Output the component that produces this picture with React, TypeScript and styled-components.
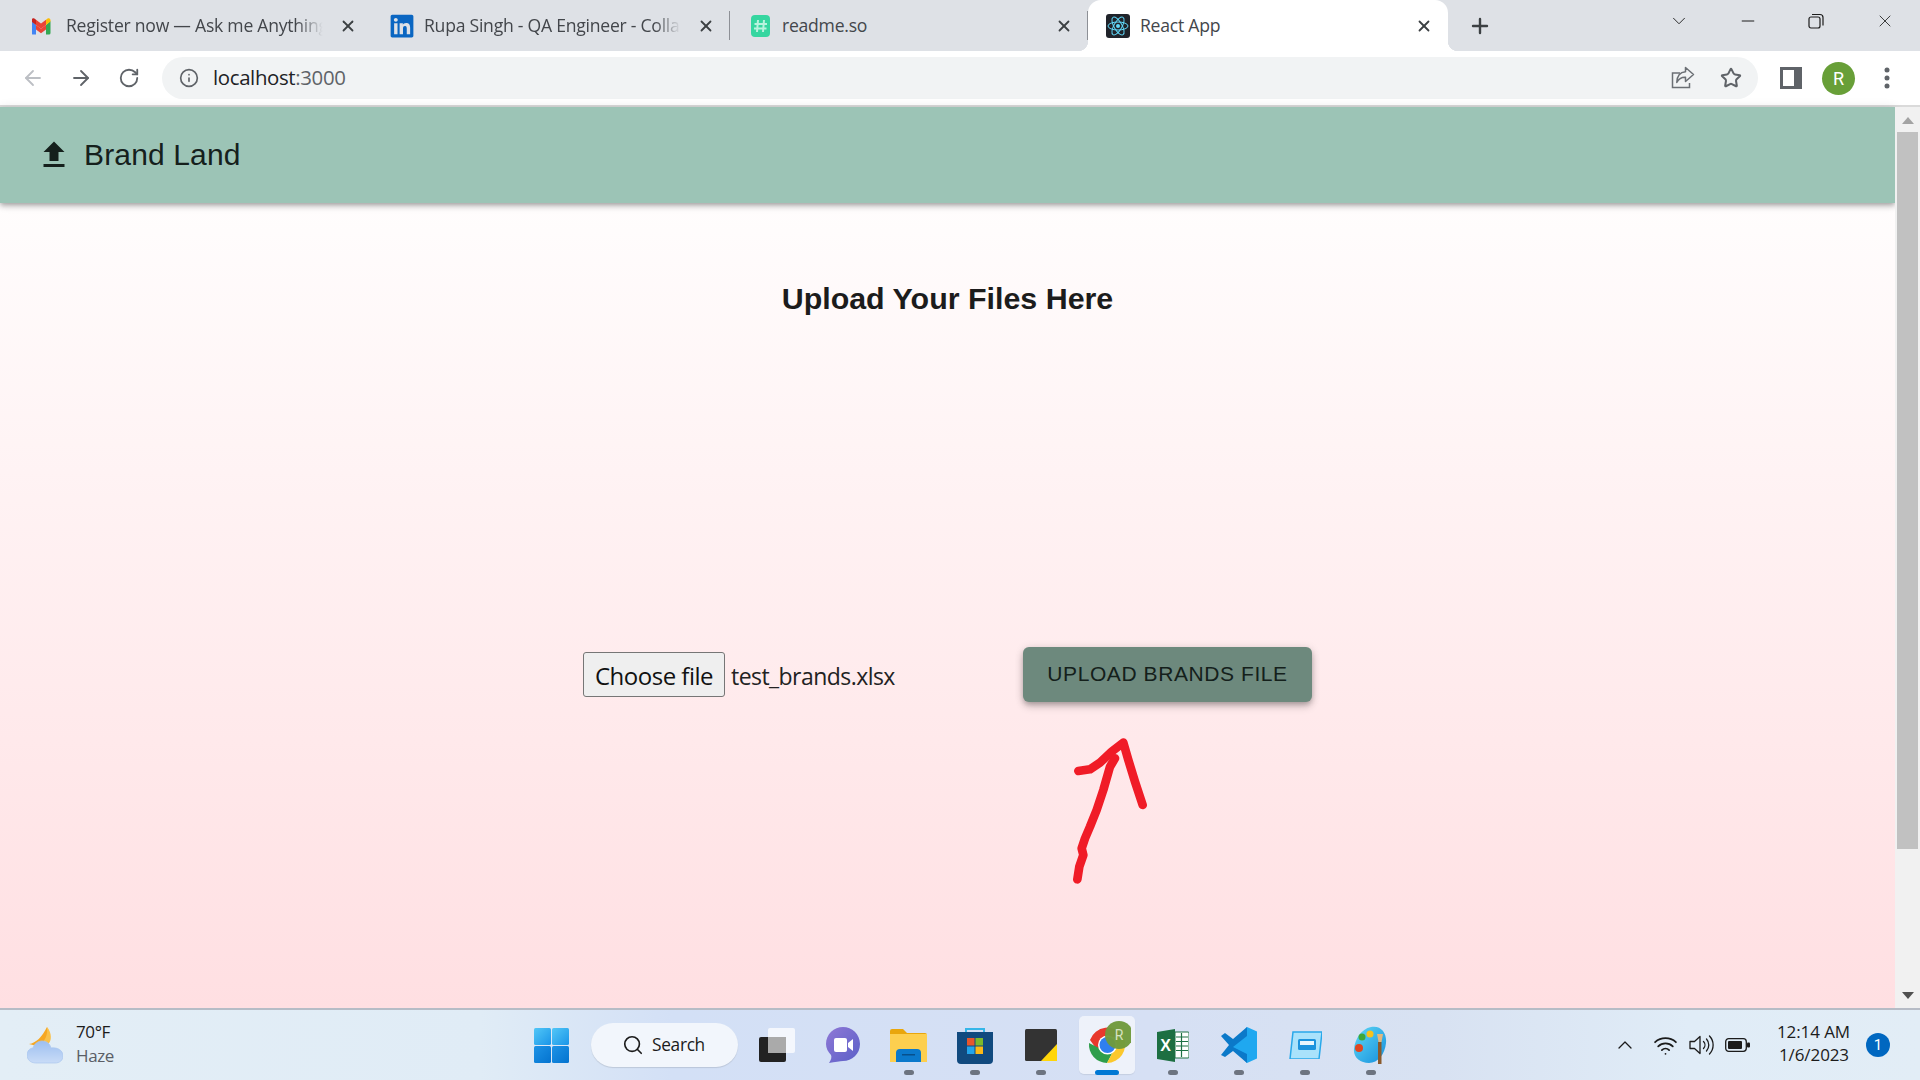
import React from "react";
import styled, { createGlobalStyle } from "styled-components";
import { ArrowLeft, ArrowRight, RotateCw, Info, Star, X, Plus, ChevronDown, ChevronUp, Minus, Search, Wifi } from "lucide-react";
import { FaLinkedin } from "react-icons/fa";

const Global = createGlobalStyle`
  html, body { margin: 0; padding: 0; overflow: hidden; background: #fff; }
  * { box-sizing: border-box; }
`;
const UI = `"Open Sans", "Noto Sans", sans-serif`;

const Screen = styled.div`
  width: 1920px; height: 1080px; display: flex; flex-direction: column; overflow: hidden; position: relative;
`;
const TabStrip = styled.div`
  height: 51px; background: #dee1e6; display: flex; align-items: stretch; padding-left: 14px; flex: none;
`;
const Tab = styled.div<{ $active?: boolean; $sep?: boolean }>`
  width: ${(p) => (p.$active ? 360 : 358)}px; display: flex; align-items: center; padding: 0 14px 0 18px; gap: 10px; position: relative;
  background: ${(p) => (p.$active ? "#fff" : "transparent")};
  border-radius: ${(p) => (p.$active ? "13px 13px 0 0" : "0")};
  ${(p) => p.$active && `
    &::before, &::after { content: ""; position: absolute; bottom: 0; width: 10px; height: 10px; }
    &::before { left: -10px; background: radial-gradient(circle at 0 0, transparent 10px, #fff 10.5px); }
    &::after { right: -10px; background: radial-gradient(circle at 100% 0, transparent 10px, #fff 10.5px); }
  `}
  ${(p) => p.$sep && `
    &::after { content: ""; position: absolute; right: 0; top: 11px; bottom: 11px; width: 1px; background: #8d9096; }
  `}
`;
const Favicon = styled.span`
  width: 24px; height: 24px; flex: none; display: flex; align-items: center; justify-content: center;
`;
const TabTitle = styled.span<{ $fade?: boolean }>`
  flex: 1; min-width: 0; overflow: hidden; white-space: nowrap; font: 400 17.6px ${UI}; letter-spacing: -0.25px; color: #43464b; position: relative; top: -1px;
  ${(p) => p.$fade && `-webkit-mask-image: linear-gradient(90deg, #000 88%, transparent 98%); mask-image: linear-gradient(90deg, #000 88%, transparent 98%);`}
`;
const TabClose = styled.span`
  width: 20px; height: 20px; flex: none; display: flex; align-items: center; justify-content: center; color: #3c4043;
`;
const NewTab = styled.span`
  margin-left: 20px; width: 24px; display: flex; align-items: center; justify-content: center; color: #3c4043;
`;
const WindowControls = styled.div`
  margin-left: auto; display: flex; align-items: flex-start; padding-right: 1px;
`;
const WinButton = styled.span`
  width: 68.5px; height: 42px; display: flex; align-items: center; justify-content: center; color: #1c1c1c;
`;
const Toolbar = styled.div`
  height: 54px; background: #fff; display: flex; align-items: center; padding-left: 21px; flex: none;
`;
const NavButton = styled.span<{ $dim?: boolean }>`
  width: 24px; height: 24px; margin-right: 24px; display: flex; align-items: center; justify-content: center;
  color: ${(p) => (p.$dim ? "#bcbfc4" : "#5f6368")};
`;
const Omnibox = styled.div`
  width: 1596px; margin-left: -3px; height: 42px; border-radius: 21px; background: #f1f3f4; display: flex; align-items: center; padding: 0 15px 0 17px; color: #5f6368;
`;
const Url = styled.span`
  margin-left: 14px; font: 400 20.4px ${UI}; letter-spacing: -0.35px; color: #202124; position: relative; top: -1px;
  & > em { font-style: normal; color: #5f6368; }
`;
const OmniActions = styled.div`
  margin-left: auto; display: flex; align-items: center; gap: 24px; color: #5f6368;
`;
const ToolIcon = styled.span<{ $lead?: boolean }>`
  width: 24px; height: 24px; display: flex; align-items: center; justify-content: center; color: #5f6368;
  ${(p) => p.$lead && "margin-left: 21px;"}
`;
const Avatar = styled.span`
  width: 33px; height: 33px; border-radius: 50%; background: #689f38; color: #fff; display: flex; align-items: center; justify-content: center; font: 400 18px "Roboto", sans-serif; margin: 0 20px 0 19px;
`;
const ChromeLine = styled.div`
  height: 2px; background: #dadada; flex: none;
`;
const Viewport = styled.div`
  height: 901px; display: flex; flex: none; position: relative;
`;
const Page = styled.div`
  flex: 1; min-width: 0; display: flex; flex-direction: column; background: linear-gradient(180deg, #fffdfd 96px, #ffdfe2 100%);
`;
const AppBar = styled.header`
  height: 96px; background: #9cc4b6; display: flex; align-items: center; padding-left: 36px; gap: 12px; flex: none;
  box-shadow: 0 2px 4px -1px rgba(0,0,0,.2), 0 4px 5px rgba(0,0,0,.14), 0 1px 10px rgba(0,0,0,.12);
`;
const Brand = styled.h1`
  margin: 0; font: 400 30px "Liberation Sans", sans-serif; color: #15201c; letter-spacing: 0.15px;
`;
const PageTitle = styled.h2`
  margin: 76px 0 0; text-align: center; font: 700 30.4px/38px "Liberation Sans", sans-serif; color: #1c1c1c;
`;
const UploadRow = styled.div`
  margin-top: 330px; display: flex; justify-content: center; align-items: center;
`;
const FileField = styled.div`
  width: 440px; display: flex; align-items: center; gap: 6px;
`;
const ChooseButton = styled.button`
  width: 142px; height: 45px; padding: 1px 0 0; background: #efefef; border: 1px solid #767676; border-radius: 3px; font: 400 24px ${UI}; letter-spacing: -0.5px; color: #111;
`;
const FileName = styled.span`
  font: 400 23px ${UI}; letter-spacing: -0.55px; color: #222; position: relative; top: 1px;
`;
const UploadButton = styled.button`
  width: 289px; height: 55px; padding: 0 0 1px; border: 0; border-radius: 6px; background: #6d897d; color: #14201b; font: 400 21px "Liberation Sans", sans-serif; letter-spacing: 0.58px; text-transform: uppercase;
  box-shadow: 0 3px 5px -1px rgba(0,0,0,.2), 0 5px 8px rgba(0,0,0,.14), 0 1px 10px rgba(0,0,0,.12);
`;
const Annotation = styled.svg`
  position: absolute; left: 1040px; top: 613px; width: 160px; height: 180px;
`;
const Scrollbar = styled.div`
  width: 25px; background: #f1f1f1; display: flex; flex-direction: column; align-items: center; flex: none; padding: 0 2px;
`;
const ScrollArrow = styled.span<{ $down?: boolean }>`
  width: 0; height: 0; border-left: 6px solid transparent; border-right: 6px solid transparent; flex: none;
  ${(p) => (p.$down ? "border-top: 7px solid #505050; margin-top: auto; margin-bottom: 9px;" : "border-bottom: 7px solid #a3a3a3; margin-top: 10px;")}
`;
const ScrollThumb = styled.div`
  width: 100%; height: 717px; margin-top: 8px; background: #c1c1c1; flex: none;
`;
const Taskbar = styled.footer`
  height: 72px; border-top: 2px solid #b6bcc6; flex: none; display: flex; align-items: stretch;
  background: linear-gradient(90deg, #e3eef6 0%, #e0ecf6 25%, #d3e0f6 35%, #d6e0f4 60%, #d8e2f2 75%, #e0ecf7 88%, #e2edf6 100%);
`;
const Weather = styled.div`
  width: 518px; display: flex; align-items: center; padding-left: 27px; gap: 13px;
`;
const WeatherText = styled.div`
  display: flex; flex-direction: column; font: 400 17px/24px ${UI}; letter-spacing: -0.4px; color: #1b1b1b; margin-top: -2px;
  & > small { font-size: 17px; color: #5a5e66; }
`;
const Slot = styled.div<{ $active?: boolean; $dot?: boolean }>`
  width: 66px; display: flex; align-items: center; justify-content: center; position: relative;
  ${(p) => p.$active && `&::before { content: ""; position: absolute; left: 5px; right: 5px; top: 6px; bottom: 6px; background: rgba(245,248,252,.75); border-radius: 5px; box-shadow: 0 1px 1px rgba(0,0,0,.08); }`}
  ${(p) => (p.$dot || p.$active) && `&::after { content: ""; position: absolute; bottom: 5px; left: 50%; transform: translateX(-50%); height: 5px; border-radius: 3px;
     width: ${p.$active ? "24px" : "10px"}; background: ${p.$active ? "#0078d4" : "#6d7480"}; }`}
  & > svg { position: relative; }
`;
const SearchPill = styled.div`
  width: 147px; height: 44px; margin: -1px 5.5px 0 7px; align-self: center; border-radius: 22px; background: #f2f6fc; box-shadow: 0 1px 1px rgba(0,0,0,.12); display: flex; align-items: center; padding-left: 31px; gap: 8px; font: 400 17.3px ${UI}; letter-spacing: -0.3px; color: #1b1b1b;
`;
const Tray = styled.div`
  margin-left: auto; display: flex; align-items: center; padding-right: 30px; color: #1b1b1b;
`;
const TrayIcon = styled.span<{ $w: number; $gap?: number }>`
  width: ${(p) => p.$w}px; margin-left: ${(p) => p.$gap ?? 0}px; display: flex; align-items: center; justify-content: center;
`;
const Clock = styled.div`
  width: 72px; margin-left: 26.5px; text-align: right; font: 400 17px/23px ${UI}; letter-spacing: -0.1px; color: #1b1b1b; white-space: nowrap; margin-top: -5px;
`;
const Badge = styled.span`
  width: 24px; height: 24px; border-radius: 50%; background: #0067c0; color: #fff; margin-left: 17px; display: flex; align-items: center; justify-content: center; font: 400 15px "Roboto", sans-serif;
`;

const Gmail = () => (
  <svg width="24" height="18" viewBox="2 0 24 18">
    <path d="M1.5 4v12a1.5 1.5 0 0 0 1.5 1.5h3V8z" fill="#4285f4" />
    <path d="M20.5 4v12a1.5 1.5 0 0 1-1.5 1.5h-3V8z" fill="#34a853" />
    <path d="M6 8v4.5l5 3.7 5-3.7V8l-5 3.7z" fill="#ea4335" />
    <path d="M1.5 4.5 6 8V2.7L4.4 1.5C3.1.6 1.5 1.5 1.5 3.2z" fill="#c5221f" />
    <path d="M20.5 4.5 16 8V2.7l1.6-1.2c1.3-.9 2.9 0 2.9 1.7z" fill="#fbbc04" />
    <path d="M6 2.7 11 6.4l5-3.7V8l-5 3.7L6 8z" fill="#ea4335" />
  </svg>
);
const Readme = () => (
  <svg width="19" height="22" viewBox="0 0 19 22">
    <rect width="19" height="22" rx="4" fill="#35d6a0" />
    <path d="M7 5 6 17M13 5l-1 12M3.5 9h12.5M3 13.5h12.5" stroke="#b9f3de" strokeWidth="2" />
  </svg>
);
const ReactLogo = () => (
  <svg width="24" height="24" viewBox="0 0 24 24">
    <rect width="24" height="24" rx="3" fill="#20232a" />
    <circle cx="12" cy="12" r="2" fill="#61dafb" />
    <g fill="none" stroke="#61dafb" strokeWidth="1">
      <ellipse cx="12" cy="12" rx="10" ry="4" />
      <ellipse cx="12" cy="12" rx="10" ry="4" transform="rotate(60 12 12)" />
      <ellipse cx="12" cy="12" rx="10" ry="4" transform="rotate(120 12 12)" />
    </g>
  </svg>
);
const Share = () => (
  <svg width="24" height="24" viewBox="0 0 24 24" fill="none" stroke="#6b6f74" strokeWidth="1.5">
    <path d="M9 7H1.5v14.5h17V17" />
    <path d="M14.5 1.5v4.2C8.500 6 6 11 5.800 16.500c2-4 5-5.500 8.700-5.300v4.300l8-7z" strokeLinejoin="round" />
  </svg>
);
const SidePanel = () => (
  <svg width="22" height="22" viewBox="0 0 22 22">
    <path d="M0 0h22v22H0zM3 3v16h11V3z" fill="#5f6368" fillRule="evenodd" />
  </svg>
);
const Dots = () => (
  <svg width="6" height="22" viewBox="0 0 6 22" fill="#5f6368">
    <circle cx="3" cy="3" r="2.5" /><circle cx="3" cy="11" r="2.500" /><circle cx="3" cy="19" r="2.500" />
  </svg>
);
const Restore = () => (
  <svg width="16" height="16" viewBox="0 0 16 16" fill="none" stroke="#1c1c1c" strokeWidth="1.2">
    <rect x="1" y="4" width="11" height="11" rx="2" />
    <path d="M4 1.500h8a3 3 0 0 1 3 3v8" />
  </svg>
);
const UploadGlyph = () => (
  <svg width="36" height="36" viewBox="0 0 24 24" fill="#15201c">
    <path d="M9 16h6v-6h4l-7-7-7 7h4zm-4 2h14v2H5z" />
  </svg>
);
const WeatherIcon = () => (
  <svg width="36" height="38" viewBox="0 0 36 38">
    <defs>
      <linearGradient id="cl" x1="0" y1="0" x2="0" y2="1"><stop offset="0" stopColor="#9dbff0" /><stop offset="1" stopColor="#c9dcf7" /></linearGradient>
    </defs>
    <path d="M20 1c3 7 1 15-10 19l-8-2c7-1 13-7 18-17z" fill="#f6a723" />
    <path d="M20 1c5 6 5 14 1 17l-10 2C18 16 21 9 20 1z" fill="#f9c04a" />
    <path d="M9 37C3 37 0 33 0 29c0-4 3-7 6-7 1-4 5-7 9-7 5 0 8 3 9 7 6-1 12 2 12 8 0 4-3 7-8 7z" fill="url(#cl)" stroke="#a9c6ee" strokeWidth=".7" />
  </svg>
);
const StartLogo = () => (
  <svg width="35" height="35" viewBox="0 0 35 35">
    <defs>
      <linearGradient id="w1" x1="0" y1="0" x2="1" y2="1"><stop offset="0" stopColor="#52c7f7" /><stop offset="1" stopColor="#1a95e8" /></linearGradient>
      <linearGradient id="w2" x1="0" y1="0" x2="1" y2="1"><stop offset="0" stopColor="#1d93e6" /><stop offset="1" stopColor="#0473cf" /></linearGradient>
    </defs>
    <rect width="17" height="17" rx="1.500" fill="url(#w1)" />
    <rect x="18" width="17" height="17" rx="1.500" fill="url(#w1)" />
    <rect y="18" width="17" height="17" rx="1.500" fill="url(#w2)" />
    <rect x="18" y="18" width="17" height="17" rx="1.500" fill="url(#w2)" />
  </svg>
);
const TaskView = () => (
  <svg width="36" height="34" viewBox="0 0 36 34">
    <rect x="0" y="9" width="27" height="25" rx="2" fill="#222" />
    <rect x="9" y="0" width="27" height="25" rx="2" fill="#fff" fillOpacity=".75" />
    <rect x="9" y="9" width="18" height="16" fill="#aaa" />
  </svg>
);
const Teams = () => (
  <svg width="34" height="36" viewBox="0 0 34 36">
    <defs><linearGradient id="tm" x1="0" y1="0" x2="1" y2="1"><stop offset="0" stopColor="#8f78d6" /><stop offset="1" stopColor="#5a5fc7" /></linearGradient></defs>
    <path d="M17 0c9 0 17 7 17 17s-8 17-17 17c-3 0-8 1-14 2 2-3 3-6 2-8-3-3-5-7-5-11C0 7 8 0 17 0z" fill="url(#tm)" />
    <rect x="8" y="11" width="13" height="14" rx="2" fill="#fff" />
    <path d="m22 16 5-4v12l-5-4z" fill="#fff" />
  </svg>
);
const Explorer = () => (
  <svg width="37" height="33" viewBox="0 0 37 33">
    <path d="M0 2a2 2 0 0 1 2-2h11l4 4h18a2 2 0 0 1 2 2v4H0z" fill="#e9a60c" />
    <path d="M0 5h37v28H0z" fill="#fdcf4f" />
    <path d="M6 33v-9a4 4 0 0 1 4-4h17a4 4 0 0 1 4 4v9z" fill="#0b79cc" />
    <rect x="12" y="25" width="13" height="1.500" fill="#07508c" />
  </svg>
);
const Store = () => (
  <svg width="36" height="37" viewBox="0 0 36 37">
    <path d="M9 6V2h18v4" fill="none" stroke="#36b6e8" strokeWidth="2" />
    <path d="M0 5h36v28a4 4 0 0 1-4 4H4a4 4 0 0 1-4-4z" fill="#114a7f" />
    <rect x="10" y="11" width="7.500" height="7.500" fill="#e8562c" />
    <rect x="18.500" y="11" width="7.500" height="7.500" fill="#7db92b" />
    <rect x="10" y="19.500" width="7.500" height="7.500" fill="#23a4ea" />
    <rect x="18.500" y="19.500" width="7.500" height="7.500" fill="#fbb917" />
  </svg>
);
const Sticky = () => (
  <svg width="32" height="32" viewBox="0 0 32 32">
    <rect width="32" height="32" rx="1.500" fill="#333" />
    <path d="M32 15 16 32h16z" fill="#ffd60a" />
  </svg>
);
const Chrome = () => (
  <svg width="48" height="48" viewBox="0 0 48 48">
    <path d="M7 19A18.500 18.500 0 0 1 40 15L23 17 15 30z" fill="#e8382c" />
    <path d="M6 22a18.500 18.500 0 0 0 18 20l8-15H16z" fill="#2f9e4b" />
    <path d="M24 42a18.500 18.500 0 0 0 17-25H25l7 10z" fill="#fbc82d" />
    <circle cx="24.500" cy="24" r="9.500" fill="#fff" />
    <circle cx="24.500" cy="24" r="8" fill="#2f7ff0" />
    <circle cx="36" cy="14" r="14" fill="#6f9a3d" fillOpacity=".97" />
    <text x="36" y="19" textAnchor="middle" fontFamily="Roboto, sans-serif" fontSize="14" fill="#d7e3c3">R</text>
  </svg>
);
const Excel = () => (
  <svg width="32" height="33" viewBox="0 0 32 33">
    <path d="M18 3h13a1 1 0 0 1 1 1v24a1 1 0 0 1-1 1H18z" fill="#fff" stroke="#1e7145" />
    <path d="M19 8h12M19 12.500h12M19 17h12M19 21.500h12M24.500 4v24" stroke="#1e7145" strokeWidth="1.200" />
    <path d="M0 3 18 0v33L0 30z" fill="#1d6f42" />
    <text x="8.500" y="22" textAnchor="middle" fontFamily="Liberation Sans, sans-serif" fontWeight="700" fontSize="16" fill="#fff">X</text>
  </svg>
);
const VSCode = () => (
  <svg width="36" height="36" viewBox="0 0 36 36">
    <path d="M26 0 36 4.500v27L26 36 11 20z" fill="#1fa8f0" />
    <path d="M26 0v9L12 20l14 7v9L12 24 4 30l-4-2 8-10-8-9 4-3 8 6z" fill="#0b79c9" />
  </svg>
);
const Sandbox = () => (
  <svg width="34" height="28" viewBox="0 0 34 28">
    <path d="M5 1h29l-3 27H2z" fill="#a9e2fb" stroke="#28a8ea" strokeWidth="1.500" />
    <rect x="10" y="8" width="18" height="11" rx="1.500" fill="#1c93dd" />
    <rect x="12" y="10" width="14" height="4" fill="#e8f6fe" />
  </svg>
);
const Paint = () => (
  <svg width="36" height="38" viewBox="0 0 36 38">
    <defs><linearGradient id="pt" x1="0" y1="0" x2="1" y2="1"><stop offset="0" stopColor="#5fd8f5" /><stop offset="1" stopColor="#158fdd" /></linearGradient></defs>
    <path d="M18 1c10-2 16 6 15 16-1 11-8 20-17 20S0 31 1 23C2 13 8 3 18 1z" fill="url(#pt)" />
    <circle cx="9" cy="11" r="3.500" fill="#3ea838" /><circle cx="17" cy="8" r="3.500" fill="#f7c21d" /><circle cx="6" cy="22" r="4" fill="#e0461f" />
    <path d="M24 8h6l-1.500 8h-3z" fill="#e3b77e" />
    <rect x="25" y="16" width="3.500" height="22" fill="#8a5a2c" />
  </svg>
);
const Speaker = () => (
  <svg width="25" height="22" viewBox="0 0 25 22" fill="none" stroke="#1b1b1b" strokeWidth="1.300">
    <path d="M1 7.500h4.500L11 2.500v17l-5.500-5H1z" strokeLinejoin="round" />
    <path d="M14.500 7.500a5 5 0 0 1 0 7M17.500 5a9 9 0 0 1 0 12M20.500 2a13 13 0 0 1 0 18" strokeLinecap="round" />
  </svg>
);
const Battery = () => (
  <svg width="25" height="14" viewBox="0 0 25 14">
    <rect x=".7" y=".7" width="20.600" height="12.600" rx="3" fill="none" stroke="#1b1b1b" strokeWidth="1.300" />
    <rect x="3" y="3" width="14" height="8" rx="1" fill="#1b1b1b" />
    <rect x="22" y="4.500" width="3" height="5" rx="1" fill="#1b1b1b" />
  </svg>
);

export default function App() {
  return (
    <Screen>
      <Global />
      <TabStrip>
        <Tab>
          <Favicon><Gmail /></Favicon>
          <TabTitle $fade>Register now — Ask me Anything about Testing</TabTitle>
          <TabClose><X size={18} strokeWidth={2.4} /></TabClose>
        </Tab>
        <Tab $sep>
          <Favicon><FaLinkedin size={26} color="#0a66c2" /></Favicon>
          <TabTitle $fade>Rupa Singh - QA Engineer - Collabera</TabTitle>
          <TabClose><X size={18} strokeWidth={2.4} /></TabClose>
        </Tab>
        <Tab $sep>
          <Favicon><Readme /></Favicon>
          <TabTitle>readme.so</TabTitle>
          <TabClose><X size={18} strokeWidth={2.4} /></TabClose>
        </Tab>
        <Tab $active>
          <Favicon><ReactLogo /></Favicon>
          <TabTitle>React App</TabTitle>
          <TabClose><X size={18} strokeWidth={2.4} /></TabClose>
        </Tab>
        <NewTab><Plus size={24} strokeWidth={2.4} /></NewTab>
        <WindowControls>
          <WinButton><ChevronDown size={22} strokeWidth={1} /></WinButton>
          <WinButton><Minus size={20} strokeWidth={1.2} /></WinButton>
          <WinButton><Restore /></WinButton>
          <WinButton><X size={20} strokeWidth={1} /></WinButton>
        </WindowControls>
      </TabStrip>
      <Toolbar>
        <NavButton $dim><ArrowLeft size={24} strokeWidth={1.8} /></NavButton>
        <NavButton><ArrowRight size={24} strokeWidth={1.8} /></NavButton>
        <NavButton><RotateCw size={22} strokeWidth={2} /></NavButton>
        <Omnibox>
          <Info size={20} strokeWidth={2} />
          <Url>localhost<em>:3000</em></Url>
          <OmniActions>
            <ToolIcon><Share /></ToolIcon>
            <ToolIcon><Star size={22} strokeWidth={2.2} /></ToolIcon>
          </OmniActions>
        </Omnibox>
        <ToolIcon $lead><SidePanel /></ToolIcon>
        <Avatar>R</Avatar>
        <ToolIcon><Dots /></ToolIcon>
      </Toolbar>
      <ChromeLine />
      <Viewport>
        <Page>
          <AppBar>
            <UploadGlyph />
            <Brand>Brand Land</Brand>
          </AppBar>
          <PageTitle>Upload Your Files Here</PageTitle>
          <UploadRow>
            <FileField>
              <ChooseButton>Choose file</ChooseButton>
              <FileName>test_brands.xlsx</FileName>
            </FileField>
            <UploadButton>Upload Brands File</UploadButton>
          </UploadRow>
        </Page>
        <Scrollbar>
          <ScrollArrow />
          <ScrollThumb />
          <ScrollArrow $down />
        </Scrollbar>
        <Annotation viewBox="0 0 480 540" fill="none" stroke="#f01c27" strokeWidth="26" strokeLinecap="round" strokeLinejoin="round">
          <path d="M112 478 118 440 130 405 125 385 135 355 150 320 170 270 190 210 210 140 225 115" />
          <path d="M115 153 150 148 180 128 215 95 250 68 265 120 285 185 308 255" />
        </Annotation>
      </Viewport>
      <Taskbar>
        <Weather>
          <WeatherIcon />
          <WeatherText>70°F<small>Haze</small></WeatherText>
        </Weather>
        <Slot><StartLogo /></Slot>
        <SearchPill><Search size={22} strokeWidth={1.8} />Search</SearchPill>
        <Slot><TaskView /></Slot>
        <Slot><Teams /></Slot>
        <Slot $dot><Explorer /></Slot>
        <Slot $dot><Store /></Slot>
        <Slot $dot><Sticky /></Slot>
        <Slot $active><Chrome /></Slot>
        <Slot $dot><Excel /></Slot>
        <Slot $dot><VSCode /></Slot>
        <Slot $dot><Sandbox /></Slot>
        <Slot $dot><Paint /></Slot>
        <Tray>
          <TrayIcon $w={24}><ChevronUp size={24} strokeWidth={1.3} /></TrayIcon>
          <TrayIcon $w={30} $gap={14}><Wifi size={25} strokeWidth={1.7} /></TrayIcon>
          <TrayIcon $w={26} $gap={8}><Speaker /></TrayIcon>
          <TrayIcon $w={26} $gap={10}><Battery /></TrayIcon>
          <Clock>12:14 AM<br />1/6/2023</Clock>
          <Badge>1</Badge>
        </Tray>
      </Taskbar>
    </Screen>
  );
}
